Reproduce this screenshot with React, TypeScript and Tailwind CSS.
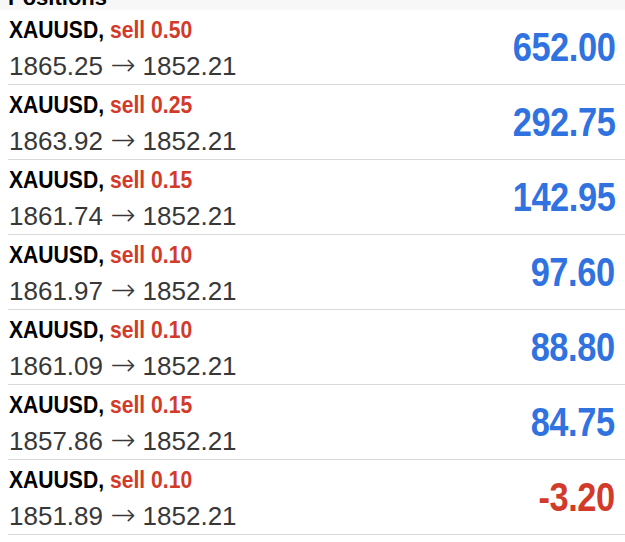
const positions = [
  { volume: "0.50", open: "1865.25", profit: "652.00" },
  { volume: "0.25", open: "1863.92", profit: "292.75" },
  { volume: "0.15", open: "1861.74", profit: "142.95" },
  { volume: "0.10", open: "1861.97", profit: "97.60" },
  { volume: "0.10", open: "1861.09", profit: "88.80" },
  { volume: "0.15", open: "1857.86", profit: "84.75" },
  { volume: "0.10", open: "1851.89", profit: "-3.20" },
];

const bold = "font-['Liberation_Sans',Arial,sans-serif] font-bold";

function PositionRow({ volume, open, profit }: { volume: string; open: string; profit: string }) {
  const loss = profit.startsWith("-");
  return (
    <div className="ml-[8px] flex h-[75px] border-b border-[#d9d9d9] pr-[10px]">
      <div className="flex flex-1 flex-col items-start pt-[6px] pl-px">
        <div
          className={`${bold} inline-block origin-left scale-x-[0.88] whitespace-nowrap text-[24px] leading-[28px] text-black`}
        >
          XAUUSD, <span className="text-[#d23a2a]">sell {volume}</span>
        </div>
        <div className="mt-[5px] font-['Liberation_Sans',Arial,sans-serif] text-[26px] leading-[32px] text-[#383838]">
          {open} <span className="font-['DejaVu_Sans',sans-serif] text-[30px] font-light">→</span> 1852.21
        </div>
      </div>
      <div className="flex items-center">
        <span
          className={`${bold} inline-block origin-right scale-x-[0.86] text-[40px] leading-none tracking-[-0.5px] ${
            loss ? "text-[#d23a2a]" : "text-[#2f72e0]"
          }`}
        >
          {profit}
        </span>
      </div>
    </div>
  );
}

export default function App() {
  return (
    <div className="h-[542px] w-[625px] overflow-hidden bg-white">
      <div className="flex h-[10px] items-end overflow-hidden bg-[#f7f7f7] pl-[8px]">
        <span className={`${bold} mb-[1px] text-[22px] leading-none text-black`}>Positions</span>
      </div>
      {positions.map((p, i) => (
        <PositionRow key={i} {...p} />
      ))}
    </div>
  );
}
